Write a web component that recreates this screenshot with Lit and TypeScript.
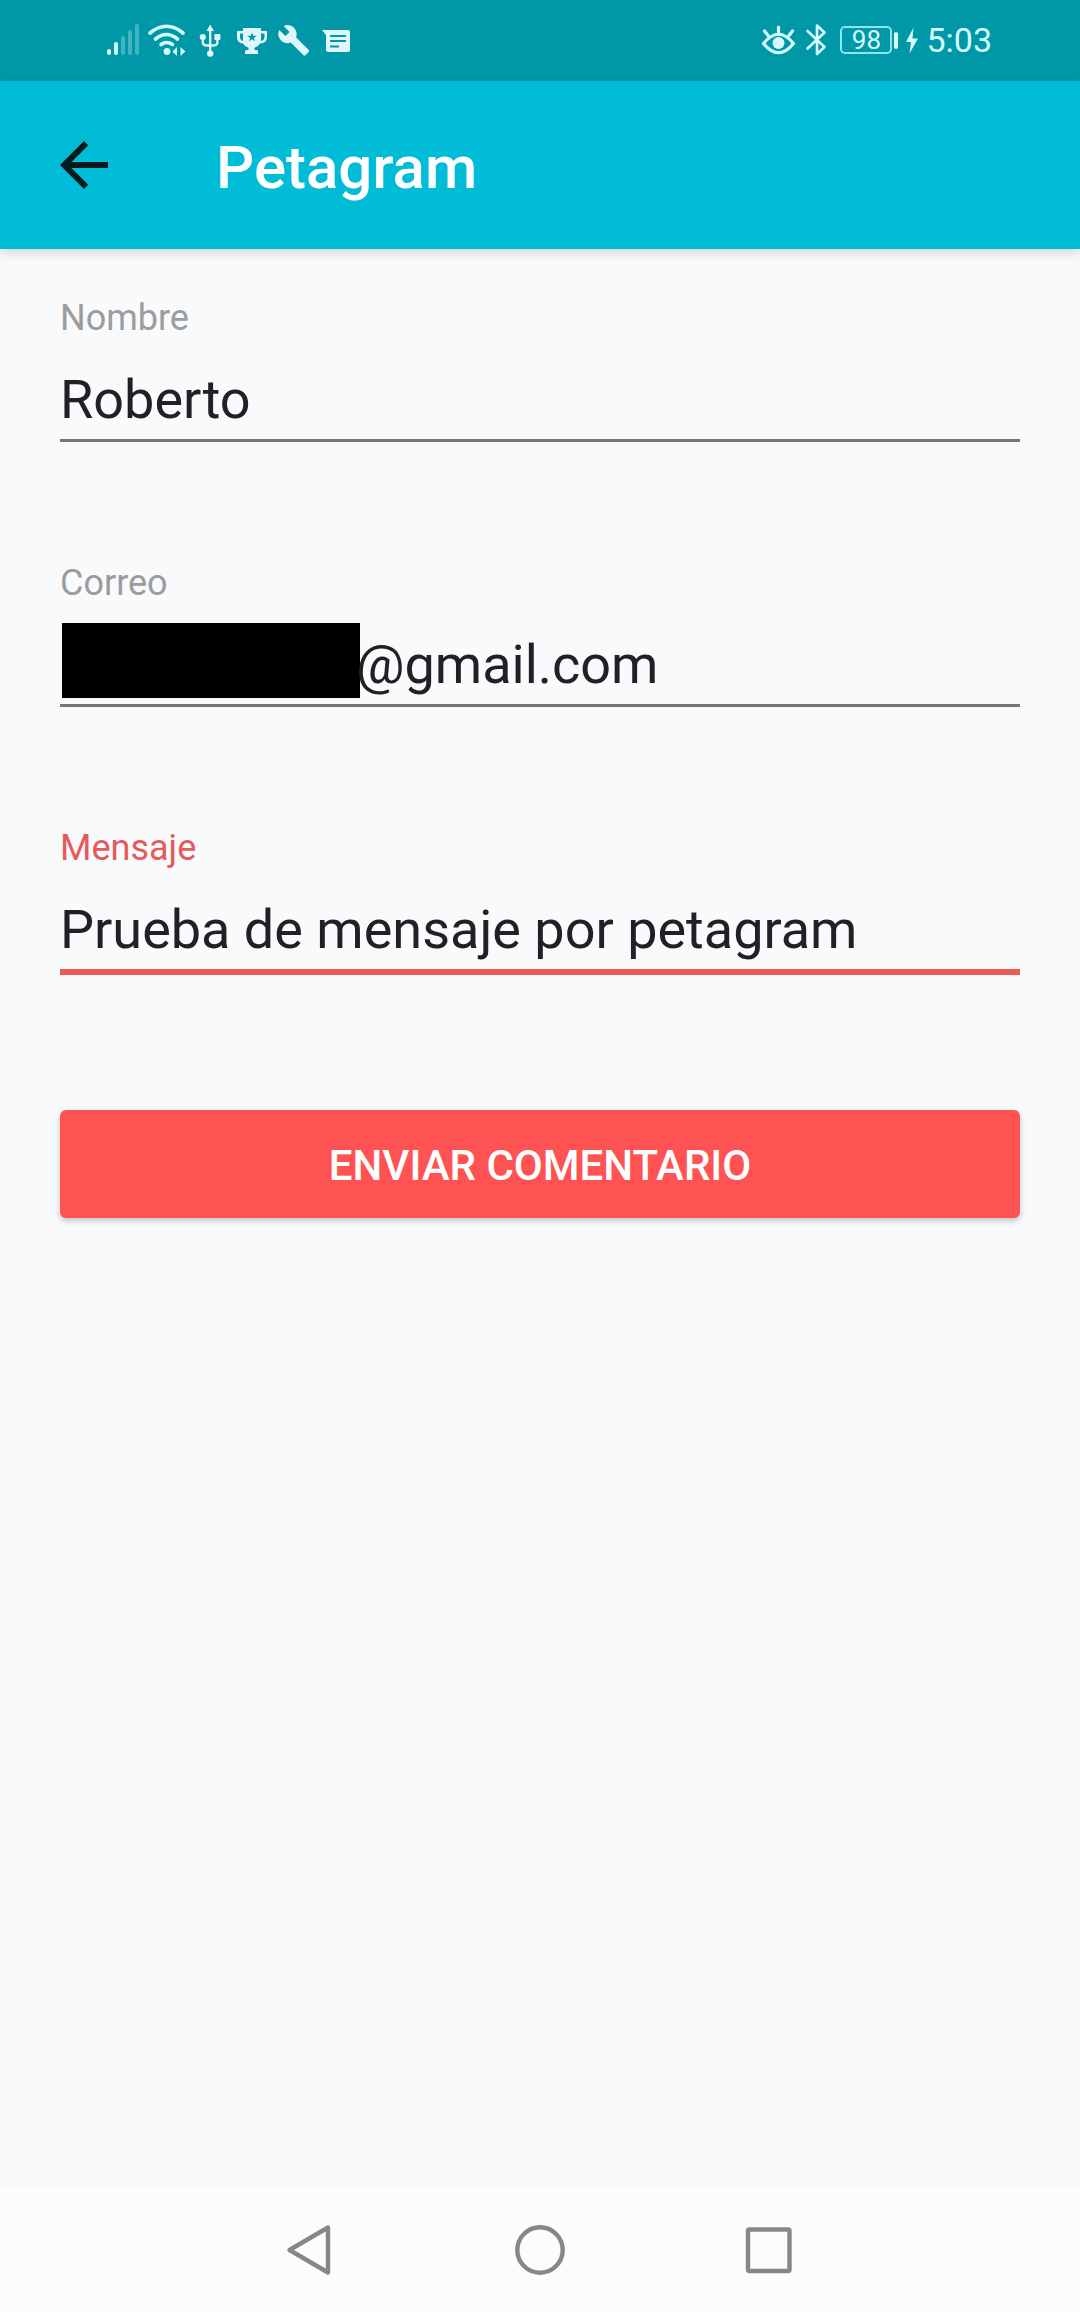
import { LitElement, html, css, svg } from "lit";
import { customElement, property, state } from "lit/decorators.js";

@customElement("status-bar")
class StatusBar extends LitElement {
  @property() time = "5:03";
  @property() battery = "98";

  static styles = css`
    :host {
      display: flex;
      box-sizing: border-box;
      justify-content: space-between;
      align-items: center;
      height: 81px;
      padding: 0 88px 1px 104px;
      background: #0097a7;
      color: #d4fbff;
      font-family: Roboto, "Noto Sans", sans-serif;
    }
    .group {
      display: flex;
      align-items: center;
    }
    .left {
      gap: 4px;
    }
    .right {
      gap: 6px;
    }
    svg {
      display: block;
      height: 40px;
      fill: currentColor;
    }
    .pale {
      color: #dff6fa;
    }
    .battery {
      display: flex;
      align-items: center;
      gap: 2px;
      margin-left: 6px;
    }
    .cell {
      box-sizing: border-box;
      width: 52px;
      height: 28px;
      border: 2px solid #8ce4ec;
      border-radius: 5px;
      font-size: 26px;
      line-height: 24px;
      text-align: center;
    }
    .nub {
      width: 4px;
      height: 17px;
      border-radius: 2px;
      background: currentColor;
    }
    .time {
      font-size: 34px;
      line-height: 40px;
    }
  `;

  render() {
    return html`
      <div class="group left">
        <svg width="38" viewBox="104 20 38 40" aria-hidden="true">
          <rect x="107" y="49" width="4" height="6" rx="2" />
          <rect x="114" y="42" width="4" height="13" rx="2" />
          <g opacity="0.3">
            <rect x="121" y="36" width="4" height="19" rx="2" />
            <rect x="128" y="30" width="4" height="25" rx="2" />
            <rect x="135" y="24" width="4" height="31" rx="2" />
          </g>
        </svg>
        <svg width="42" viewBox="146 20 42 40" aria-hidden="true">
          <g fill="none" stroke="currentColor" stroke-width="3.6" stroke-linecap="round">
            <path d="M150 33 Q166.500 19.500 183 33" />
            <path d="M155.500 39 Q166.500 30 177.500 39" />
            <path d="M161 44.500 Q166.500 40.500 172.500 44.500" />
          </g>
          <circle cx="167" cy="51.500" r="3.400" />
          <path d="M177 47v9l-4.500-4.500zM180.500 47v9l5-4.500z" />
        </svg>
        <svg class="pale" width="36" viewBox="192 20 36 40" aria-hidden="true">
          <path d="M210.200 24.500l3.700 6.500h-7.400z" />
          <circle cx="202.800" cy="37" r="3.100" />
          <rect x="214.400" y="34" width="6" height="6" rx="0.800" />
          <circle cx="210.200" cy="53.600" r="3.200" />
          <path
            d="M210.200 29v24M202.800 38v4q0 3.500 3.500 3.500h7.600q3.500 0 3.500-3.500V38"
            fill="none"
            stroke="currentColor"
            stroke-width="2.300"
          />
        </svg>
        <svg class="pale" width="38" viewBox="232 20 38 40" aria-hidden="true">
          <path
            fill-rule="evenodd"
            d="M243 28h18v3h6v6q0 6-7 6.500-2 3.500-5.500 4.300V50h2q1.500 0 1.500 1.500V54h-13v-2.500q0-1.500 1.500-1.500h2v-2.200q-3.500-.8-5.500-4.300-6-.500-6-6.500v-6h6zM243 33.500h-3v3.500q0 3 3 4zM261 33.500V41q3.500-1 3.500-4v-3.500zM252 32.500l1.200 3.300h3.500l-2.800 2.100 1 3.400-2.900-2-2.900 2 1-3.400-2.800-2.100h3.500z"
          />
        </svg>
        <svg class="pale" width="38" viewBox="274 20 38 40" aria-hidden="true">
          <path
            transform="translate(277 23.500) scale(1.400)"
            d="M22.700 19l-9.100-9.100c.9-2.300.4-5-1.500-6.900-2-2-5-2.400-7.400-1.300L9 6 6 9 1.600 4.700C.4 7.100.9 10.100 2.900 12.100c1.900 1.900 4.600 2.400 6.900 1.500l9.100 9.100c.4.4 1 .4 1.400 0l2.300-2.300c.5-.4.5-1.100.1-1.400z"
          />
        </svg>
        <svg class="pale" width="36" viewBox="316 20 36 40" aria-hidden="true">
          <path
            fill-rule="evenodd"
            d="M322 30h26q2 0 2 2v18q0 2-2 2h-20q-2 0-2-2V35zM330 35v2h16v-2zM330 40v2h16v-2zM330 45.500v2h9v-2z"
          />
        </svg>
      </div>
      <div class="group right">
        <svg width="38" viewBox="760 20 38 40" aria-hidden="true">
          <g fill="none" stroke="currentColor" stroke-width="3.200" stroke-linecap="round">
            <path d="M763.500 43.500Q778.500 25 793.500 43.500 778.500 62 763.500 43.500z" stroke-linejoin="round" />
            <path d="M778.500 27v6M764.500 31l3.500 4.500M792.500 31l-3.500 4.500" />
          </g>
          <circle cx="778.500" cy="43" r="6" />
        </svg>
        <svg width="24" viewBox="804 20 24 40" aria-hidden="true">
          <path
            d="M807.500 31l17 16-7.500 7V25.500l7.500 7-17 16"
            fill="none"
            stroke="currentColor"
            stroke-width="2.600"
            stroke-linecap="round"
            stroke-linejoin="round"
          />
        </svg>
        <div class="battery">
          <div class="cell">${this.battery}</div>
          <div class="nub"></div>
        </div>
        <svg width="16" viewBox="904 20 16 40" aria-hidden="true">
          <path d="M913.500 27.500L906 42h5l-1.500 11.500L918 38.500h-5.500z" />
        </svg>
        <div class="time">${this.time}</div>
      </div>
    `;
  }
}

@customElement("app-bar")
class AppBar extends LitElement {
  @property() heading = "";

  static styles = css`
    :host {
      display: flex;
      align-items: center;
      gap: 96px;
      height: 168px;
      padding: 0 48px;
      background: #00bcd7;
      box-shadow: 0 4px 10px rgba(0, 0, 0, 0.14);
      font-family: Roboto, "Noto Sans", sans-serif;
    }
    button {
      border: 0;
      padding: 0;
      background: none;
      color: #051a1e;
    }
    svg {
      display: block;
      fill: currentColor;
    }
    h1 {
      margin: 0;
      padding-top: 6px;
      color: #fff;
      font-size: 60px;
      font-weight: 500;
      line-height: 72px;
    }
  `;

  render() {
    return html`
      <button type="button" aria-label="Atrás">
        <svg width="72" height="72" viewBox="0 0 24 24">
          <path d="M20 11H7.830l5.590-5.590L12 4l-8 8 8 8 1.410-1.410L7.830 13H20z" />
        </svg>
      </button>
      <h1>${this.heading}</h1>
    `;
  }
}

@customElement("text-field")
class TextField extends LitElement {
  @property() label = "";
  @property() value = "";
  @property() type = "text";
  @property({ type: Boolean }) masked = false;
  @property({ type: Boolean }) active = false;

  static styles = css`
    :host {
      display: block;
      font-family: Roboto, "Noto Sans", sans-serif;
    }
    label {
      display: block;
      color: #9b9c9e;
      font-size: 36px;
      line-height: 42px;
    }
    .control {
      display: flex;
      align-items: flex-end;
      margin-top: 16px;
      border-bottom: 3px solid #757575;
    }
    .mask {
      flex: none;
      width: 298px;
      height: 75px;
      margin: 0 -4px 6px 2px;
      background: #000;
    }
    input {
      flex: 1;
      min-width: 0;
      box-sizing: border-box;
      height: 84px;
      padding: 4px 0 0;
      border: 0;
      outline: 0;
      background: none;
      color: #202124;
      font: 54px / 64px Roboto, "Noto Sans", sans-serif;
    }
    :host([active]) label {
      color: #e65a5c;
    }
    :host([active]) .control {
      border-bottom: 6px solid #ee5859;
    }
  `;

  render() {
    return html`
      <label for="entry">${this.label}</label>
      <div class="control">
        ${this.masked ? html`<span class="mask"></span>` : ""}
        <input id="entry" type=${this.type} .value=${this.value} />
      </div>
    `;
  }
}

@customElement("nav-bar")
class NavBar extends LitElement {
  static styles = css`
    :host {
      display: flex;
      height: 124px;
      padding: 0 18%;
      background: #fcfcfe;
    }
    button {
      display: flex;
      flex: 1;
      align-items: center;
      justify-content: center;
      border: 0;
      padding: 0;
      background: none;
      color: #868789;
    }
    svg {
      fill: none;
      stroke: currentColor;
      stroke-width: 4.4;
      stroke-linejoin: round;
    }
  `;

  private items = [
    { name: "Atrás", shape: svg`<path d="M48 7.500v45L9.500 30z" />` },
    { name: "Inicio", shape: svg`<circle cx="30" cy="30" r="22.700" />` },
    { name: "Recientes", shape: svg`<rect x="8" y="9.500" width="41.500" height="41.500" rx="1.500" />` },
  ];

  render() {
    return this.items.map(
      (item) => html`
        <button type="button" aria-label=${item.name}>
          <svg width="60" height="60" viewBox="0 0 60 60">${item.shape}</svg>
        </button>
      `
    );
  }
}

@customElement("app-root")
class AppRoot extends LitElement {
  @state() private fields = [
    { label: "Nombre", value: "Roberto", masked: false, active: false },
    { label: "Correo", value: "@gmail.com", masked: true, active: false },
    { label: "Mensaje", value: "Prueba de mensaje por petagram", masked: false, active: true },
  ];

  static styles = css`
    :host {
      display: flex;
      flex-direction: column;
      min-height: 100vh;
      background: #f9fafc;
      font-family: Roboto, "Noto Sans", sans-serif;
    }
    form {
      display: flex;
      flex: 1;
      flex-direction: column;
      gap: 120px;
      padding: 48px 60px;
    }
    .send {
      height: 108px;
      margin-top: 15px;
      padding: 4px 0 0;
      border: 0;
      border-radius: 6px;
      background: #ff5252;
      box-shadow: 0 3px 6px rgba(0, 0, 0, 0.22);
      color: #fff;
      font: 500 42px / 50px Roboto, "Noto Sans", sans-serif;
      text-transform: uppercase;
    }
  `;

  render() {
    return html`
      <status-bar></status-bar>
      <app-bar heading="Petagram"></app-bar>
      <form @submit=${(e: Event) => e.preventDefault()}>
        ${this.fields.map(
          (f) => html`
            <text-field
              .label=${f.label}
              .value=${f.value}
              ?masked=${f.masked}
              ?active=${f.active}
            ></text-field>
          `
        )}
        <button class="send" type="submit">Enviar comentario</button>
      </form>
      <nav-bar></nav-bar>
    `;
  }
}
